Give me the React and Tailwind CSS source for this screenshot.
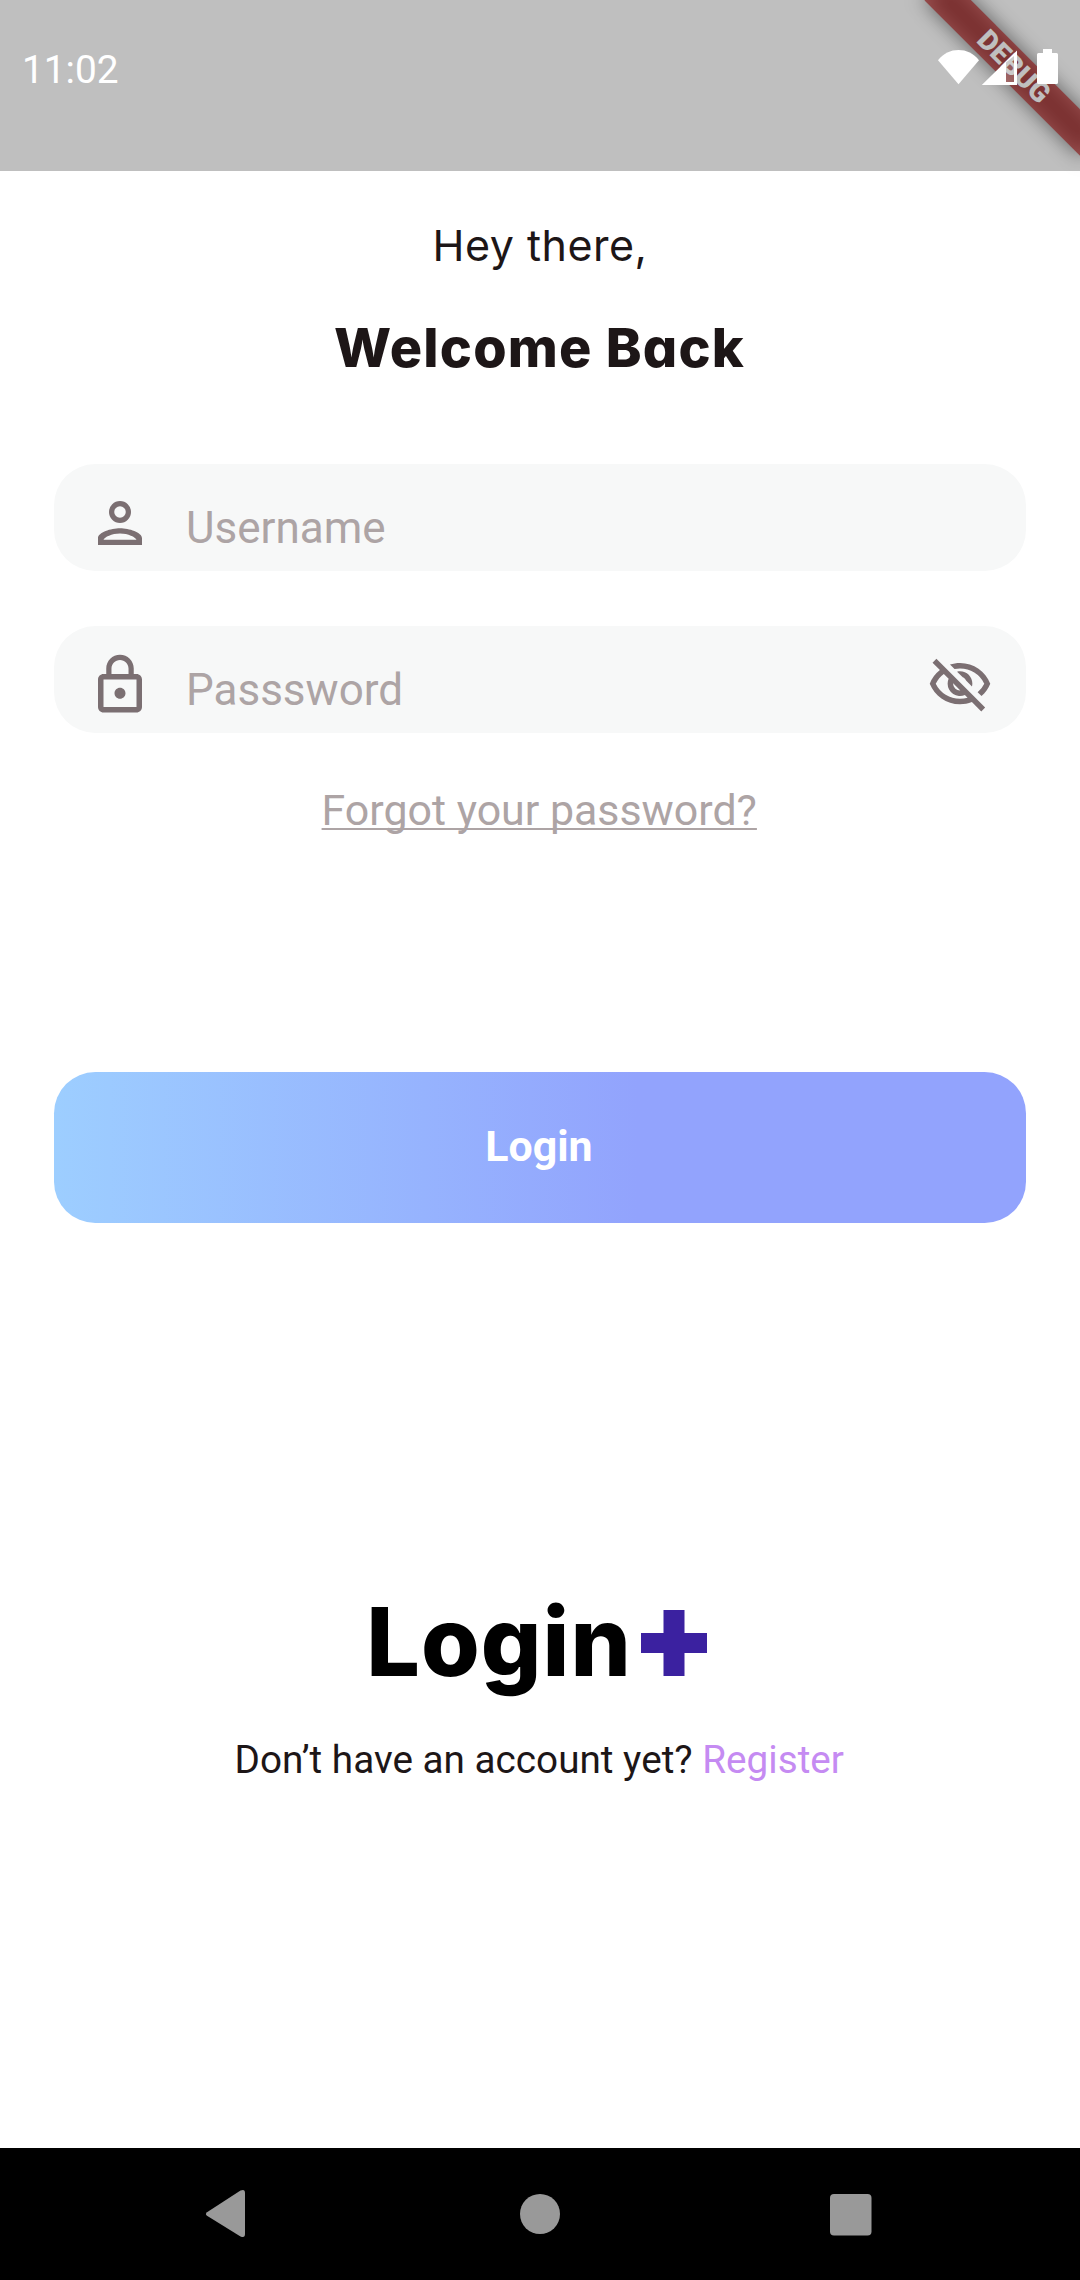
import React from "react";
import { MdLockOutline, MdOutlineVisibilityOff } from "react-icons/md";

function PersonIcon({ className }) {
  return (
    <svg className={className} viewBox="0 0 24 24" fill="currentColor" fillRule="evenodd">
      <path d="M12 4a4 4 0 1 0 0 8 4 4 0 0 0 0-8Zm0 1.900a2.100 2.100 0 1 1 0 4.200 2.100 2.100 0 0 1 0-4.200Z" />
      <path d="M12 13.900C8.700 13.900 4 15.400 4 17.500V20H20V17.500C20 15.400 15.300 13.900 12 13.900ZM6 18.100C6.400 17.100 9 15.800 12 15.800S17.600 17.100 18 18.100Z" />
    </svg>
  );
}

function DebugBanner() {
  return (
    <div className="absolute top-0 right-0 w-[260px] h-[260px] overflow-hidden pointer-events-none">
      <div className="absolute left-[84px] top-[49.6px] w-[220px] h-[33px] rotate-45 bg-black/50 blur-[10px]" />
      <div className="absolute left-[84px] top-[49.6px] w-[220px] h-[33px] rotate-45 bg-[#b71c1c]/63 flex items-center justify-center">
        <span className="text-[28px] leading-none font-black text-white">DEBUG</span>
      </div>
    </div>
  );
}

function StatusBar() {
  return (
    <header className="relative w-full h-[171px]">
      <DebugBanner />
      <div className="absolute inset-0 bg-black/25" />
      <div className="relative flex justify-between pl-[22px] pt-[40px] pr-[21px]">
        <span className="text-[38.8px] leading-[60px] text-white">11:02</span>
        <svg className="w-[121px] h-[37px] mt-[8px]" viewBox="0 0 121 37" fill="#fff">
          <path d="M0 12.300C5.500 5.200 12.600 2 20.500 2S35.500 5.200 41 12.300L20.500 36.300Z" />
          <path fillRule="evenodd" d="M43.800 37 79 2.500V37ZM68 14.500V34H76V8Z" />
          <path d="M68 14.500 76 7V34H68Z" fillOpacity=".2" />
          <path d="M105 1h9v4h4.500a1.500 1.500 0 0 1 1.500 1.500V34.500a1.500 1.500 0 0 1-1.500 1.500H100.500a1.500 1.500 0 0 1-1.500-1.500V6.500A1.500 1.500 0 0 1 100.500 5H105Z" />
        </svg>
      </div>
    </header>
  );
}

function Field({ icon: Icon, label, trailing: Trailing }) {
  return (
    <div className="w-full h-[107.25px] rounded-[41.25px] bg-[#f7f8f8] px-[33px] pt-[26px] flex items-start text-[#7b6f72]">
      <Icon className="w-[66px] h-[66px] shrink-0" />
      <span className="flex-1 ml-[33px] mt-[8px] text-[44px] leading-[60px] text-[#ada4a5]">{label}</span>
      {Trailing && <Trailing className="w-[66px] h-[66px] shrink-0" />}
    </div>
  );
}

function NavBar() {
  return (
    <nav className="w-full h-[132px] bg-black">
      <svg className="block w-full h-full" viewBox="0 0 1080 132" fill="#999">
        <path d="M207 64.200 240.500 42.600Q245 40.500 245 45V86Q245 90.500 240.500 88.400L207 67.800Q204.800 66 207 64.200Z" />
        <circle cx="540" cy="66" r="20" />
        <rect x="830" y="46" width="41.500" height="41.500" rx="4" />
      </svg>
    </nav>
  );
}

export default function App() {
  return (
    <div className="w-[1080px] h-[2280px] bg-white flex flex-col overflow-hidden font-['Roboto',sans-serif]">
      <StatusBar />
      <main className="flex-1 flex flex-col items-center px-[54px] text-[#1d1617]">
        <p className="mt-[44px] text-[43px] leading-[60px] tracking-[0.5px] font-['Inter',sans-serif] [font-feature-settings:'cv11']">
          Hey there,
        </p>
        <h1 className="mt-[38px] pr-[1px] text-[54px] leading-[70px] tracking-[1.2px] font-extrabold font-['Inter',sans-serif] [font-feature-settings:'cv11']">
          Welcome Back
        </h1>
        <div className="w-full mt-[81px] flex flex-col gap-[54.5px]">
          <Field icon={PersonIcon} label="Username" />
          <Field icon={MdLockOutline} label="Passsword" trailing={MdOutlineVisibilityOff} />
        </div>
        <a className="mt-[47px] mr-[1.5px] text-[42.9px] leading-[60px] text-[#ada4a5] underline decoration-[2px] underline-offset-[3px] [text-decoration-skip-ink:none]">
          Forgot your password?
        </a>
        <button className="w-full h-[151px] mt-[232px] pr-[2px] pb-[2px] rounded-[41.25px] bg-linear-to-r from-[#9dceff] to-[#92a3fd] to-60% text-white text-[42.9px] font-bold">
          Login
        </button>
        <div className="mt-[359px] h-[120px] pr-[6.5px] flex items-start justify-center text-black">
          <span className="text-[95px] leading-[120px] tracking-[1px] font-extrabold font-['Inter',sans-serif]">Login</span>
          <svg className="w-[66px] h-[66px] mt-[28px] ml-[9.5px]" viewBox="0 0 66 66" fill="#3b21a0">
            <path d="M22.500 0H43.500V23H66V43H43.500V66H22.500V43H0V23H22.500Z" />
          </svg>
        </div>
        <p className="mt-[28px] pr-[1.5px] text-[38.7px] leading-[60px]">
          Don’t have an account yet? <a className="text-[#c58bf2]">Register</a>
        </p>
      </main>
      <NavBar />
    </div>
  );
}
